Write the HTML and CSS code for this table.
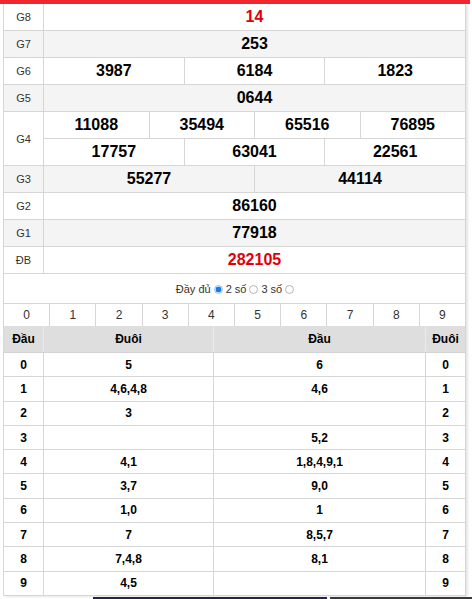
FILE: index.html
```html
<!DOCTYPE html>
<html lang="vi">
<head>
<meta charset="utf-8">
<link rel="stylesheet" href="styles.css">
</head>
<body>
<div class="topbar"></div>
<div class="wrap">
  <div class="row"><div class="lbl">G8</div><div class="vals"><div class="v red">14</div></div></div>
  <div class="row alt"><div class="lbl">G7</div><div class="vals"><div class="v">253</div></div></div>
  <div class="row"><div class="lbl">G6</div><div class="vals"><div class="v">3987</div><div class="v">6184</div><div class="v">1823</div></div></div>
  <div class="row alt"><div class="lbl">G5</div><div class="vals"><div class="v">0644</div></div></div>
  <div class="row g4"><div class="lbl">G4</div>
    <div class="vals col">
      <div class="sub"><div class="v">11088</div><div class="v">35494</div><div class="v">65516</div><div class="v">76895</div></div>
      <div class="sub"><div class="v">17757</div><div class="v">63041</div><div class="v">22561</div></div>
    </div>
  </div>
  <div class="row alt"><div class="lbl">G3</div><div class="vals"><div class="v">55277</div><div class="v">44114</div></div></div>
  <div class="row"><div class="lbl">G2</div><div class="vals"><div class="v">86160</div></div></div>
  <div class="row alt"><div class="lbl">G1</div><div class="vals"><div class="v">77918</div></div></div>
  <div class="row"><div class="lbl">ĐB</div><div class="vals"><div class="v red">282105</div></div></div>

  <div class="opts">
    <span>Đầy đủ</span><input type="radio" name="m" checked><span>2 số</span><input type="radio" name="m"><span>3 số</span><input type="radio" name="m">
  </div>

  <div class="digits">
    <div class="d">0</div><div class="d">1</div><div class="d">2</div><div class="d">3</div><div class="d">4</div>
    <div class="d">5</div><div class="d">6</div><div class="d">7</div><div class="d">8</div><div class="d">9</div>
  </div>

  <div class="loto">
    <div class="lr head"><div class="c c1">Đầu</div><div class="c c2">Đuôi</div><div class="c c3">Đầu</div><div class="c c4">Đuôi</div></div>
    <div class="lr"><div class="c c1">0</div><div class="c c2">5</div><div class="c c3">6</div><div class="c c4">0</div></div>
    <div class="lr"><div class="c c1">1</div><div class="c c2">4,6,4,8</div><div class="c c3">4,6</div><div class="c c4">1</div></div>
    <div class="lr"><div class="c c1">2</div><div class="c c2">3</div><div class="c c3"></div><div class="c c4">2</div></div>
    <div class="lr"><div class="c c1">3</div><div class="c c2"></div><div class="c c3">5,2</div><div class="c c4">3</div></div>
    <div class="lr"><div class="c c1">4</div><div class="c c2">4,1</div><div class="c c3">1,8,4,9,1</div><div class="c c4">4</div></div>
    <div class="lr"><div class="c c1">5</div><div class="c c2">3,7</div><div class="c c3">9,0</div><div class="c c4">5</div></div>
    <div class="lr"><div class="c c1">6</div><div class="c c2">1,0</div><div class="c c3">1</div><div class="c c4">6</div></div>
    <div class="lr"><div class="c c1">7</div><div class="c c2">7</div><div class="c c3">8,5,7</div><div class="c c4">7</div></div>
    <div class="lr"><div class="c c1">8</div><div class="c c2">7,4,8</div><div class="c c3">8,1</div><div class="c c4">8</div></div>
    <div class="lr"><div class="c c1">9</div><div class="c c2">4,5</div><div class="c c3"></div><div class="c c4">9</div></div>
  </div>
</div>
<div class="strip"><div class="s1"></div><div class="s2"></div></div>
</body>
</html>
```
FILE: styles.css
```css
* { box-sizing: border-box; }
body {
  margin: 0;
  background: #fff;
  font-family: "Liberation Sans", Arial, sans-serif;
  color: #000;
}
.topbar {
  height: 4px;
  width: 470px;
  background: #f0282d;
}
.wrap {
  margin-left: 3px;
  width: 463px;
  border-left: 1px solid #d6d6d6;
  border-right: 1px solid #d6d6d6;
  box-shadow: 2px 1px 2px rgba(0, 0, 0, 0.1);
}
.row {
  display: flex;
  height: 27px;
  border-bottom: 1px solid #d6d6d6;
}
.row.alt { background: #f4f4f4; }
.row.g4 { height: 54px; }
.lbl {
  width: 40px;
  flex: none;
  border-right: 1px solid #d6d6d6;
  display: flex;
  align-items: center;
  justify-content: center;
  font-size: 11px;
  color: #333;
}
.vals {
  flex: 1;
  display: flex;
}
.vals.col { flex-direction: column; }
.sub {
  flex: 1;
  display: flex;
}
.sub + .sub { border-top: 1px solid #d6d6d6; }
.v {
  flex: 1;
  display: flex;
  align-items: center;
  justify-content: center;
  font-size: 16px;
  font-weight: bold;
}
.v + .v { border-left: 1px solid #d6d6d6; }
.red { color: #e0000b; }

.opts {
  height: 29px;
  display: flex;
  align-items: center;
  justify-content: center;
  font-size: 11px;
  color: #333;
  padding-left: 4px;
}
.opts input {
  appearance: none;
  -webkit-appearance: none;
  width: 9px;
  height: 9px;
  margin: 1px 3px 0 3px;
  border: 1px solid #b5b5b5;
  border-radius: 50%;
  background: #fff;
}
.opts input:checked {
  border-color: #9cc4f0;
  background: radial-gradient(circle, #1a7ae6 0 55%, #d4e6fb 62%);
}

.digits {
  display: flex;
  border-top: 1px solid #d6d6d6;
  height: 23px;
}
.d {
  flex: 1;
  display: flex;
  align-items: center;
  justify-content: center;
  font-size: 12px;
  color: #333;
}
.d + .d { border-left: 1px solid #d6d6d6; }

.lr {
  display: flex;
  height: 24.3px;
  border-bottom: 1px solid #d6d6d6;
}
.lr.head {
  height: 27px;
  background: #dedede;
  border-bottom-color: #d2d2d2;
}
.c {
  display: flex;
  align-items: center;
  justify-content: center;
  font-size: 12px;
  font-weight: bold;
  border-right: 1px solid #d6d6d6;
}
.head .c { border-right-color: #ebebeb; }
.c1 { width: 40px; }
.c2 { width: 170px; }
.c3 { width: 212px; }
.c4 { width: 39px; border-right: none; }

.strip {
  display: flex;
  margin-top: 1px;
  height: 3px;
}
.s1 {
  margin-left: 93px;
  width: 234px;
  background: #2b2050;
}
.s2 {
  margin-left: 3px;
  flex: 1;
  background: #3a3a3a;
}
```
